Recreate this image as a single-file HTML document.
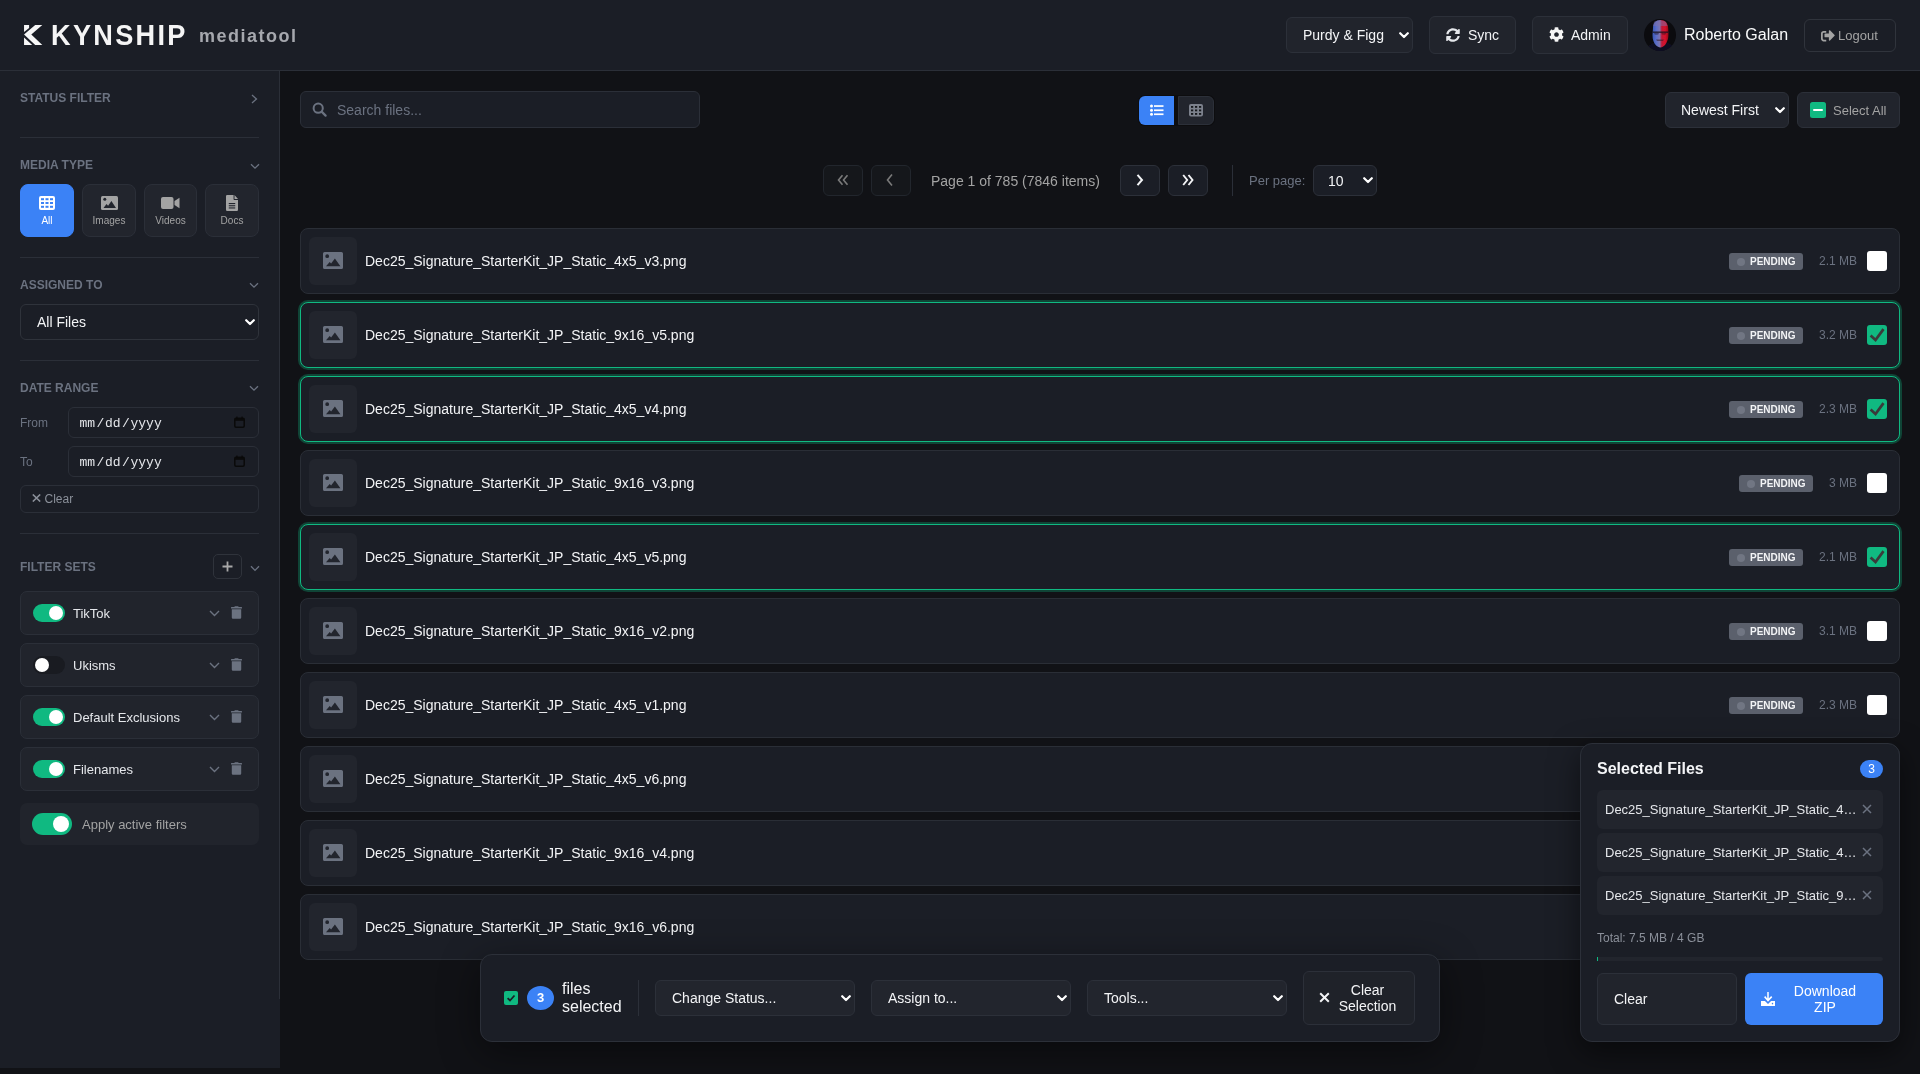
<!DOCTYPE html>
<html><head><meta charset="utf-8">
<style>
*{box-sizing:border-box;margin:0;padding:0}
html,body{width:1920px;height:1074px;overflow:hidden;-webkit-font-smoothing:antialiased;background:#111216;font-family:"Liberation Sans",sans-serif;color:#e5e7eb}
div,span,svg{position:absolute}
.t{white-space:nowrap}
#hdr{left:0;top:0;width:1920px;height:71px;background:#1b1e26;border-bottom:1px solid #2b2f38}
#side{left:0;top:71px;width:280px;height:997px;background:#1b1e26}
#sideb{left:279px;top:71px;width:1px;height:928px;background:#2b2f38}
.lbl{left:20px;font-size:12px;font-weight:700;color:#6b7280;line-height:14px;white-space:nowrap}
.dv{left:20px;width:239px;height:1px;background:#2b2f38}
.hbtn{background:#21242c;border:1px solid #2c3039;border-radius:6px}
.mt{top:184px;width:54px;height:53px;border-radius:8px;background:#22252d;border:1px solid #2b2f38;color:#a3a3a3;font-size:10px;text-align:center}
.mt span{left:0;right:0;top:30px;line-height:12px}
.card{left:20px;width:239px;height:44px;background:#21242c;border:1px solid #2b2f38;border-radius:7px}
.tog{left:12px;top:12px;width:32px;height:18px;border-radius:9px;background:#10b981}
.tog i{position:absolute;top:2px;left:16px;width:14px;height:14px;border-radius:50%;background:#fff}
.tog.off{background:#191b21}
.tog.off i{left:2px}
.card .nm{left:52px;top:14px;font-size:13px;line-height:15px;color:#e5e7eb;white-space:nowrap}
.card .cv{left:188px;top:18px}
.card .tr{left:210px;top:14px}
.row{left:300px;width:1600px;height:66px;background:#1b1e26;border:1px solid #2a2e36;border-radius:8px;overflow:hidden}
.row.sel{border:1px solid #10b981;box-shadow:0 0 0 2px rgba(16,185,129,.3);overflow:visible}
.thumb{width:48px;height:48px;border-radius:6px;background:#22252d}
.thumb svg{left:14px;top:15px}
.fn{font-size:14px;line-height:16px;color:#f3f4f6;white-space:nowrap}
.badge{width:74px;height:17px;border-radius:3px;background:#5b606c;color:#f3f4f6;font-size:10px;font-weight:700;line-height:17px;padding-left:21px;white-space:nowrap}
.badge i{position:absolute;left:8px;top:4.5px;width:8px;height:8px;border-radius:50%;background:#717683}
.size{font-size:12px;line-height:14px;color:#6b7280;white-space:nowrap;text-align:right}
.cb{left:1566px;width:20px;height:20px;border-radius:3px;background:#fff}
.cb.on{background:#10b981}
.cb svg{left:0;top:0}
.pg{top:165px;width:40px;height:31px;border-radius:6px}
.pg.dis{background:#15171b;border:1px solid #22262d}
.pg.en{background:#1b1e26;border:1px solid #2c3039}
.sel2{background:#21242c;border:1px solid #2c3039;border-radius:6px}
</style></head><body><div id="root" style="left:0;top:0;width:1920px;height:1074px;will-change:transform">
<div id="hdr">
  <svg style="left:20px;top:20px" width="30" height="30" viewBox="0 0 30 30"><path fill="#f8f8f8" d="M4.05 4.9H9.1V8.1L4.05 12z M15.2 4.9H22.3L11.3 14.5 22.3 24.9H15.2L4.05 14.5z M4.05 17.5L12.2 24.9H4.05z"/></svg>
  <div class="t" style="left:51px;top:20px;font-size:29.5px;line-height:30px;font-weight:700;color:#f5f5f5;letter-spacing:2.5px;transform:scaleX(0.92);transform-origin:0 0">KYNSHIP</div>
  <div class="t" style="left:199px;top:26px;font-size:18px;line-height:20px;font-weight:700;color:#a6a8ae;letter-spacing:1.5px">mediatool</div>

  <div class="hbtn" style="left:1286px;top:17px;width:127px;height:36px"></div>
  <div class="t" style="left:1303px;top:27px;font-size:14px;line-height:16px;color:#f3f4f6">Purdy &amp; Figg</div>
  <svg style="left:1399px;top:32px" width="10" height="7" viewBox="0 0 10 7"><path d="M1.2 1.2L5 5l3.8-3.8" fill="none" stroke="#fff" stroke-width="2.2" stroke-linecap="round" stroke-linejoin="round"/></svg>

  <div class="hbtn" style="left:1429px;top:16px;width:87px;height:38px"></div>
  <svg style="left:1446px;top:28px" width="14" height="14" viewBox="0 0 512 512"><path fill="#e5e7eb" d="M370.7 133.3C339.5 104 298.9 88 255.8 88c-77.5.1-144.3 53.2-162.8 126.9-1.3 5.4-6.1 9.2-11.7 9.2H24.1c-7.5 0-13.2-6.8-11.8-14.2C33.9 94.9 134.8 8 256 8c66.4 0 126.8 26.1 171.3 68.7L463 41c15.1-15.1 41-4.4 41 17v134c0 13.3-10.7 24-24 24H346c-21.4 0-32.1-25.9-17-41l41.7-41.7zM32 296h134c21.4 0 32.1 25.9 17 41l-41.8 41.8c31.3 29.3 71.8 45.3 114.9 45.2 77.4-.1 144.3-53.1 162.8-126.8 1.3-5.4 6.1-9.2 11.7-9.2h57.3c7.5 0 13.2 6.8 11.8 14.2C478.1 417.1 377.2 504 256 504c-66.4 0-126.8-26.1-171.3-68.7L49 471c-15.1 15.1-41 4.4-41-17V320c0-13.3 10.7-24 24-24z"/></svg>
  <div class="t" style="left:1468px;top:27px;font-size:14px;line-height:16px;color:#f3f4f6">Sync</div>

  <div class="hbtn" style="left:1532px;top:16px;width:96px;height:38px"></div>
  <svg style="left:1549px;top:27px" width="15" height="15" viewBox="0 0 512 512"><path fill="#f5f5f5" d="M487.4 315.7l-42.6-24.6c4.3-23.2 4.3-47 0-70.2l42.6-24.6c4.9-2.8 7.1-8.6 5.5-14-11.1-35.6-30-67.8-54.7-94.6-3.8-4.1-10-5.1-14.8-2.3L380.8 110c-17.9-15.4-38.5-27.3-60.8-35.1V25.8c0-5.6-3.9-10.5-9.4-11.7-36.7-8.2-74.3-7.8-109.2 0-5.5 1.2-9.4 6.1-9.4 11.7V75c-22.2 7.9-42.8 19.8-60.8 35.1L88.7 85.5c-4.9-2.8-11-1.9-14.8 2.3-24.7 26.7-43.6 58.9-54.7 94.6-1.7 5.4.6 11.2 5.5 14L67.3 221c-4.3 23.2-4.3 47 0 70.2l-42.6 24.6c-4.9 2.8-7.1 8.6-5.5 14 11.1 35.6 30 67.8 54.7 94.6 3.8 4.1 10 5.1 14.8 2.3l42.6-24.6c17.9 15.4 38.5 27.3 60.8 35.1v49.2c0 5.6 3.9 10.5 9.4 11.7 36.7 8.2 74.3 7.8 109.2 0 5.5-1.2 9.4-6.1 9.4-11.7v-49.2c22.2-7.9 42.8-19.8 60.8-35.1l42.6 24.6c4.9 2.8 11 1.9 14.8-2.3 24.7-26.7 43.6-58.9 54.7-94.6 1.5-5.5-.7-11.3-5.6-14.1zM256 336c-44.1 0-80-35.9-80-80s35.9-80 80-80 80 35.9 80 80-35.9 80-80 80z"/></svg>
  <div class="t" style="left:1571px;top:27px;font-size:14px;line-height:16px;color:#f3f4f6">Admin</div>

  <svg style="left:1644px;top:19px" width="32" height="32" viewBox="0 0 32 32">
    <defs>
      <linearGradient id="fg" x1="0" y1="0" x2="1" y2="0"><stop offset="0" stop-color="#3a58b8"/><stop offset=".25" stop-color="#5c6ec8"/><stop offset=".45" stop-color="#7c74b0"/><stop offset=".58" stop-color="#c01838"/><stop offset=".8" stop-color="#d8102a"/><stop offset="1" stop-color="#900818"/></linearGradient>
      <clipPath id="cc"><circle cx="16" cy="16" r="16"/></clipPath><filter id="bl" x="-20%" y="-20%" width="140%" height="140%"><feGaussianBlur stdDeviation="0.6"/></filter>
    </defs>
    <g clip-path="url(#cc)">
      <rect width="32" height="32" fill="#0b0b0e"/><g filter="url(#bl)">
      <path d="M3 32c1-6 5-8 9-9l4 4 5-4c4 1 9 3 10 9z" fill="#0e1020"/>
      <path d="M9 9c0-5 3-8 7.5-8S24 4 24.2 9l.3 6c0 6-2 9-3.5 11-1.5 1.6-3 2.4-4.5 2.4s-3.4-.8-5-2.6C10 24 8.5 21 8.5 16z" fill="url(#fg)"/>
      <path d="M8.6 12.4h15.8v1.6H8.6z" fill="#1a1420" opacity=".75"/>
      <ellipse cx="12.5" cy="14.2" rx="2.4" ry="1.5" fill="#2a2440" opacity=".6"/>
      <ellipse cx="19.8" cy="14.2" rx="2.4" ry="1.5" fill="#501020" opacity=".6"/>
      <path d="M12 20.5h8l-1 1.6h-6z" fill="#301828" opacity=".55"/>
      <path d="M10 3c2-2 9-2 12 0l1.5 4H9z" fill="#8070a8" opacity=".5"/>
    </g></g>
  </svg>
  <div class="t" style="left:1684px;top:26px;font-size:16px;line-height:18px;color:#f9fafb">Roberto Galan</div>

  <div style="left:1804px;top:19px;width:92px;height:33px;border:1px solid #30343c;border-radius:6px"></div>
  <svg style="left:1821px;top:29px" width="14" height="13" viewBox="0 0 512 460"><path fill="#a3a3a3" d="M497 243L329 411c-15 15-41 4.5-41-17v-96H152c-13.3 0-24-10.7-24-24v-96c0-13.3 10.7-24 24-24h136V58c0-21.400 26-32 41-17l168 168c9.3 9.4 9.3 24.6 0 34zM192 436v-40c0-6.600-5.400-12-12-12H96c-17.700 0-32-14.300-32-32V160c0-17.700 14.300-32 32-32h84c6.600 0 12-5.400 12-12V76c0-6.600-5.400-12-12-12H96c-53 0-96 43-96 96v192c0 53 43 96 96 96h84c6.600 0 12-5.400 12-12z"/></svg>
  <div class="t" style="left:1838px;top:28px;font-size:13px;line-height:15px;color:#a3a3a3">Logout</div>
</div>

<div id="side"></div>
<div id="sideb"></div>

<!-- STATUS FILTER -->
<div class="lbl" style="top:91px">STATUS FILTER</div>
<svg style="left:251px;top:94px" width="7" height="10" viewBox="0 0 7 10"><path d="M1 1l4.5 4L1 9" fill="none" stroke="#6b7280" stroke-width="1.3"/></svg>
<div class="dv" style="top:137px"></div>

<!-- MEDIA TYPE -->
<div class="lbl" style="top:158px">MEDIA TYPE</div>
<svg style="left:249.5px;top:162.5px" width="10" height="7" viewBox="0 0 10 7"><path d="M1 1.2l4 4 4-4" fill="none" stroke="#6b7280" stroke-width="1.3"/></svg>
<div class="mt" style="left:20px;background:#3b82f6;border-color:#3b82f6;color:#fff">
  <svg style="left:18px;top:11px" width="16" height="14" viewBox="0 0 16 14"><rect x="0" y="0" width="16" height="14" rx="2" fill="#fff"/><g fill="#3b82f6"><rect x="2" y="2.2" width="3" height="2"/><rect x="6.5" y="2.2" width="3" height="2"/><rect x="11" y="2.2" width="3" height="2"/><rect x="2" y="6" width="3" height="2"/><rect x="6.5" y="6" width="3" height="2"/><rect x="11" y="6" width="3" height="2"/><rect x="2" y="9.8" width="3" height="2"/><rect x="6.5" y="9.8" width="3" height="2"/><rect x="11" y="9.8" width="3" height="2"/></g></svg>
  <span>All</span></div>
<div class="mt" style="left:82px">
  <svg style="left:18px;top:11px" width="17" height="14" viewBox="0 0 17 14"><rect x="0" y="0" width="17" height="14" rx="1.5" fill="#a3a3a3"/><circle cx="3.8" cy="3.3" r="1.5" fill="#22252d"/><path d="M2.5 12h12.5l-4.6-7-3.3 4.8-1.6-1.8z" fill="#22252d"/></svg>
  <span>Images</span></div>
<div class="mt" style="left:144px;width:53px">
  <svg style="left:16px;top:12px" width="19" height="12" viewBox="0 0 19 12"><rect x="0" y="0" width="12.5" height="12" rx="2" fill="#a3a3a3"/><path d="M13.5 4l5-3.2v10.4l-5-3.2z" fill="#a3a3a3"/></svg>
  <span>Videos</span></div>
<div class="mt" style="left:205px;width:54px">
  <svg style="left:20px;top:10px" width="12" height="16" viewBox="0 0 13 16" preserveAspectRatio="none"><path d="M1.2 0H8.2v4.3a.8.8 0 0 0 .8.8H13V14.8A1.2 1.2 0 0 1 11.8 16H1.2A1.2 1.2 0 0 1 0 14.8V1.2A1.2 1.2 0 0 1 1.2 0zM9.2 0L13 3.9H9.2z" fill="#a3a3a3"/><g fill="#22252d"><rect x="3" y="8" width="7" height="1.1"/><rect x="3" y="10.2" width="7" height="1.1"/><rect x="3" y="12.4" width="7" height="1.1"/></g></svg>
  <span>Docs</span></div>
<div class="dv" style="top:257px"></div>

<!-- ASSIGNED TO -->
<div class="lbl" style="top:278px">ASSIGNED TO</div>
<svg style="left:249px;top:282px" width="10" height="7" viewBox="0 0 10 7"><path d="M1 1.2l4 4 4-4" fill="none" stroke="#6b7280" stroke-width="1.3"/></svg>
<div style="left:20px;top:304px;width:239px;height:36px;border:1px solid #2f333b;border-radius:6px;background:#1b1e26"></div>
<div class="t" style="left:37px;top:314px;font-size:14px;line-height:16px;color:#f3f4f6">All Files</div>
<svg style="left:245px;top:319px" width="10" height="7" viewBox="0 0 10 7"><path d="M1.2 1.2L5 5l3.8-3.8" fill="none" stroke="#fff" stroke-width="2.2" stroke-linecap="round" stroke-linejoin="round"/></svg>
<div class="dv" style="top:360px"></div>

<!-- DATE RANGE -->
<div class="lbl" style="top:381px">DATE RANGE</div>
<svg style="left:249px;top:385px" width="10" height="7" viewBox="0 0 10 7"><path d="M1 1.2l4 4 4-4" fill="none" stroke="#6b7280" stroke-width="1.3"/></svg>
<div class="t" style="left:20px;top:416px;font-size:12px;line-height:14px;color:#6b7280">From</div>
<div style="left:68px;top:407px;width:191px;height:31px;border:1px solid #2b2f38;border-radius:6px;background:#1b1e26"></div>
<div class="t" style="left:79.5px;top:416px;font-family:'Liberation Mono',monospace;font-size:13px;line-height:16px;color:#e5e7eb">mm</div><div class="t" style="left:96.5px;top:416px;font-family:'Liberation Mono',monospace;font-size:13px;line-height:16px;color:#e5e7eb">/</div><div class="t" style="left:105px;top:416px;font-family:'Liberation Mono',monospace;font-size:13px;line-height:16px;color:#e5e7eb">dd</div><div class="t" style="left:122px;top:416px;font-family:'Liberation Mono',monospace;font-size:13px;line-height:16px;color:#e5e7eb">/</div><div class="t" style="left:130.5px;top:416px;font-family:'Liberation Mono',monospace;font-size:13px;line-height:16px;color:#e5e7eb">yyyy</div>
<svg style="left:234px;top:416px" width="11" height="12" viewBox="0 0 11 12"><rect x="0.8" y="2.2" width="9.4" height="9" rx="1.2" fill="none" stroke="#0a0a0a" stroke-width="1.5"/><rect x="0.8" y="2.2" width="9.4" height="2.6" fill="#0a0a0a"/><rect x="2.2" y="0.6" width="1.4" height="2" fill="#0a0a0a"/><rect x="7.4" y="0.6" width="1.4" height="2" fill="#0a0a0a"/></svg>
<div class="t" style="left:20px;top:455px;font-size:12px;line-height:14px;color:#6b7280">To</div>
<div style="left:68px;top:446px;width:191px;height:31px;border:1px solid #2b2f38;border-radius:6px;background:#1b1e26"></div>
<div class="t" style="left:79.5px;top:455px;font-family:'Liberation Mono',monospace;font-size:13px;line-height:16px;color:#e5e7eb">mm</div><div class="t" style="left:96.5px;top:455px;font-family:'Liberation Mono',monospace;font-size:13px;line-height:16px;color:#e5e7eb">/</div><div class="t" style="left:105px;top:455px;font-family:'Liberation Mono',monospace;font-size:13px;line-height:16px;color:#e5e7eb">dd</div><div class="t" style="left:122px;top:455px;font-family:'Liberation Mono',monospace;font-size:13px;line-height:16px;color:#e5e7eb">/</div><div class="t" style="left:130.5px;top:455px;font-family:'Liberation Mono',monospace;font-size:13px;line-height:16px;color:#e5e7eb">yyyy</div>
<svg style="left:234px;top:455px" width="11" height="12" viewBox="0 0 11 12"><rect x="0.8" y="2.2" width="9.4" height="9" rx="1.2" fill="none" stroke="#0a0a0a" stroke-width="1.5"/><rect x="0.8" y="2.2" width="9.4" height="2.6" fill="#0a0a0a"/><rect x="2.2" y="0.6" width="1.4" height="2" fill="#0a0a0a"/><rect x="7.4" y="0.6" width="1.4" height="2" fill="#0a0a0a"/></svg>
<div style="left:20px;top:485px;width:239px;height:28px;border:1px solid #2b2f38;border-radius:6px;background:#1b1e26"></div>
<svg style="left:32px;top:494px" width="9" height="8" viewBox="0 0 9 8"><path d="M0.8 0.5l7.4 7M8.2 0.5l-7.4 7" stroke="#8b909a" stroke-width="1.6"/></svg><div class="t" style="left:44.5px;top:492px;font-size:12px;line-height:14px;color:#8b909a">Clear</div>
<div class="dv" style="top:533px"></div>

<!-- FILTER SETS -->
<div class="lbl" style="top:560px">FILTER SETS</div>
<div style="left:213px;top:554px;width:29px;height:25px;border:1px solid #2f333b;border-radius:5px"></div>
<svg style="left:222px;top:560.5px" width="11" height="11" viewBox="0 0 11 11"><path d="M5.5 0.5v10M0.5 5.5h10" stroke="#a8a8a8" stroke-width="1.8"/></svg>
<svg style="left:249.5px;top:564.5px" width="10" height="7" viewBox="0 0 10 7"><path d="M1 1.2l4 4.2 4-4.2" fill="none" stroke="#6b7280" stroke-width="1.3"/></svg>

<div class="card" style="top:591px"><div class="tog"><i></i></div><div class="nm">TikTok</div><svg class="cv" width="11" height="7" viewBox="0 0 11 7"><path d="M1 1l4.5 4.5L10 1" fill="none" stroke="#6b7280" stroke-width="1.4"/></svg><div class="tr"><svg width="11" height="13" viewBox="0 0 448 512"><path fill="#6b7280" d="M32 464a48 48 0 0 0 48 48h288a48 48 0 0 0 48-48V128H32zM432 32H312l-9.4-18.7A24 24 0 0 0 281.1 0H166.8a23.7 23.7 0 0 0-21.4 13.3L136 32H16A16 16 0 0 0 0 48v32a16 16 0 0 0 16 16h416a16 16 0 0 0 16-16V48a16 16 0 0 0-16-16z"/></svg></div></div>
<div class="card" style="top:643px"><div class="tog off"><i></i></div><div class="nm">Ukisms</div><svg class="cv" width="11" height="7" viewBox="0 0 11 7"><path d="M1 1l4.5 4.5L10 1" fill="none" stroke="#6b7280" stroke-width="1.4"/></svg><div class="tr"><svg width="11" height="13" viewBox="0 0 448 512"><path fill="#6b7280" d="M32 464a48 48 0 0 0 48 48h288a48 48 0 0 0 48-48V128H32zM432 32H312l-9.4-18.7A24 24 0 0 0 281.1 0H166.8a23.7 23.7 0 0 0-21.4 13.3L136 32H16A16 16 0 0 0 0 48v32a16 16 0 0 0 16 16h416a16 16 0 0 0 16-16V48a16 16 0 0 0-16-16z"/></svg></div></div>
<div class="card" style="top:695px"><div class="tog"><i></i></div><div class="nm">Default Exclusions</div><svg class="cv" width="11" height="7" viewBox="0 0 11 7"><path d="M1 1l4.5 4.5L10 1" fill="none" stroke="#6b7280" stroke-width="1.4"/></svg><div class="tr"><svg width="11" height="13" viewBox="0 0 448 512"><path fill="#6b7280" d="M32 464a48 48 0 0 0 48 48h288a48 48 0 0 0 48-48V128H32zM432 32H312l-9.4-18.7A24 24 0 0 0 281.1 0H166.8a23.7 23.7 0 0 0-21.4 13.3L136 32H16A16 16 0 0 0 0 48v32a16 16 0 0 0 16 16h416a16 16 0 0 0 16-16V48a16 16 0 0 0-16-16z"/></svg></div></div>
<div class="card" style="top:747px"><div class="tog"><i></i></div><div class="nm">Filenames</div><svg class="cv" width="11" height="7" viewBox="0 0 11 7"><path d="M1 1l4.5 4.5L10 1" fill="none" stroke="#6b7280" stroke-width="1.4"/></svg><div class="tr"><svg width="11" height="13" viewBox="0 0 448 512"><path fill="#6b7280" d="M32 464a48 48 0 0 0 48 48h288a48 48 0 0 0 48-48V128H32zM432 32H312l-9.4-18.7A24 24 0 0 0 281.1 0H166.8a23.7 23.7 0 0 0-21.4 13.3L136 32H16A16 16 0 0 0 0 48v32a16 16 0 0 0 16 16h416a16 16 0 0 0 16-16V48a16 16 0 0 0-16-16z"/></svg></div></div>

<div style="left:20px;top:803px;width:239px;height:42px;background:#21242c;border-radius:7px"></div>
<div style="left:32px;top:813px;width:40px;height:22px;border-radius:11px;background:#10b981"><i style="position:absolute;left:21px;top:3px;width:16px;height:16px;border-radius:50%;background:#fff"></i></div>
<div class="t" style="left:82px;top:817px;font-size:13px;line-height:15px;color:#a3a3a3">Apply active filters</div>

<!-- SEARCH -->
<div style="left:300px;top:91px;width:400px;height:37px;background:#1b1e26;border:1px solid #2b2f38;border-radius:6px"></div>
<svg style="left:312px;top:102px" width="15" height="15" viewBox="0 0 15 15"><circle cx="6.2" cy="6.2" r="4.6" fill="none" stroke="#6b7280" stroke-width="2"/><path d="M9.6 9.6l4 4" stroke="#6b7280" stroke-width="2.2" stroke-linecap="round"/></svg>
<div class="t" style="left:337px;top:102px;font-size:14px;line-height:16px;color:#6b7280">Search files...</div>

<!-- VIEW TOGGLE -->
<div style="left:1138px;top:95px;width:77px;height:31px;background:#0d0d0f;border-radius:7px"></div>
<div style="left:1139px;top:96px;width:35px;height:29px;background:#3b82f6;border-radius:6px 0 0 6px"></div>
<svg style="left:1150px;top:104px" width="14" height="13" viewBox="0 0 14 13"><g fill="#fff"><circle cx="1.5" cy="2" r="1.5"/><circle cx="1.5" cy="6.3" r="1.5"/><circle cx="1.5" cy="10.3" r="1.5"/><rect x="4" y="1.2" width="9.5" height="1.7"/><rect x="4" y="5.4" width="9.5" height="1.7"/><rect x="4" y="9.4" width="9.5" height="1.7"/></g></svg>
<div style="left:1178px;top:96px;width:36px;height:29px;background:#22252d;border:1px solid #2c3039;border-radius:0 6px 6px 0"></div>
<svg style="left:1189px;top:104px" width="14" height="13" viewBox="0 0 14 13"><rect x="0" y="0" width="14" height="12.5" rx="2" fill="#7c818c"/><g fill="#15171b"><rect x="2" y="2" width="2.2" height="1.8"/><rect x="6" y="2" width="2.2" height="1.8"/><rect x="10" y="2" width="2.2" height="1.8"/><rect x="2" y="5.5" width="2.2" height="1.8"/><rect x="6" y="5.5" width="2.2" height="1.8"/><rect x="10" y="5.5" width="2.2" height="1.8"/><rect x="2" y="9" width="2.2" height="1.8"/><rect x="6" y="9" width="2.2" height="1.8"/><rect x="10" y="9" width="2.2" height="1.8"/></g></svg>

<!-- SORT / SELECT ALL -->
<div class="sel2" style="left:1665px;top:92px;width:124px;height:36px"></div>
<div class="t" style="left:1681px;top:102px;font-size:14px;line-height:16px;color:#f3f4f6">Newest First</div>
<svg style="left:1775px;top:107px" width="10" height="7" viewBox="0 0 10 7"><path d="M1.2 1.2L5 5l3.8-3.8" fill="none" stroke="#fff" stroke-width="2.2" stroke-linecap="round" stroke-linejoin="round"/></svg>
<div class="sel2" style="left:1797px;top:92px;width:103px;height:36px"></div>
<div style="left:1810px;top:102px;width:16px;height:16px;background:#10b981;border-radius:2.5px"><i style="position:absolute;left:3px;top:6.8px;width:10px;height:2.4px;background:#fff;border-radius:1px"></i></div>
<div class="t" style="left:1833px;top:103px;font-size:13px;line-height:15px;color:#a3a3a3">Select All</div>

<!-- PAGINATION -->
<div class="pg dis" style="left:823px"></div>
<svg style="left:837px;top:174px" width="12" height="12" viewBox="0 0 12 12"><path d="M5.5 1.2L1.5 6l4 4.8M10.5 1.2L6.5 6l4 4.8" fill="none" stroke="#7a7a7a" stroke-width="1.6"/></svg>
<div class="pg dis" style="left:871px"></div>
<svg style="left:886px;top:174px" width="8" height="12" viewBox="0 0 8 12"><path d="M6 0.5L1.5 6 6 11.5" fill="none" stroke="#7a7a7a" stroke-width="1.6"/></svg>
<div class="t" style="left:931px;top:173px;font-size:14px;line-height:16px;color:#a3a3a3">Page 1 of 785 (7846 items)</div>
<div class="pg en" style="left:1120px"></div>
<svg style="left:1136px;top:174px" width="8" height="12" viewBox="0 0 8 12"><path d="M1.5 0.8L6 6 1.5 11.2" fill="none" stroke="#f3f4f6" stroke-width="2"/></svg>
<div class="pg en" style="left:1168px"></div>
<svg style="left:1182px;top:174px" width="12" height="12" viewBox="0 0 12 12"><path d="M1.2 1L5.2 6l-4 5M6.5 1l4 5-4 5" fill="none" stroke="#f3f4f6" stroke-width="1.9"/></svg>
<div style="left:1232px;top:165px;width:1px;height:31px;background:#2b2f38"></div>
<div class="t" style="left:1249px;top:173px;font-size:13px;line-height:15px;color:#6b7280">Per page:</div>
<div class="sel2" style="left:1313px;top:165px;width:64px;height:31px;background:#1b1e26"></div>
<div class="t" style="left:1328px;top:173px;font-size:14px;line-height:16px;color:#f3f4f6">10</div>
<svg style="left:1363px;top:177px" width="10" height="7" viewBox="0 0 10 7"><path d="M1.2 1.2L5 5l3.8-3.8" fill="none" stroke="#fff" stroke-width="2.2" stroke-linecap="round" stroke-linejoin="round"/></svg>

<!-- ROWS -->
<div class="row" style="top:228px">
<div class="thumb" style="left:8px;top:8px"><svg width="20" height="17" viewBox="0 0 20 17"><path fill="#6b7280" fill-rule="evenodd" d="M1.6 0h16.8A1.6 1.6 0 0 1 20 1.6v13.8a1.6 1.6 0 0 1-1.6 1.6H1.6A1.6 1.6 0 0 1 0 15.4V1.6A1.6 1.6 0 0 1 1.6 0zM4.2 2.3a1.9 1.9 0 1 0 0 3.8 1.9 1.9 0 1 0 0-3.8zM3 14.2h14.4L11.9 6.4 8.1 11.6 6.7 10z"/></svg></div>
<div class="fn" style="left:64px;top:24px">Dec25_Signature_StarterKit_JP_Static_4x5_v3.png</div>
<div class="badge" style="left:1428px;top:24px"><i></i>PENDING</div>
<div class="size" style="right:42px;top:25px">2.1 MB</div>
<div class="cb" style="top:22px"></div>
</div>
<div class="row sel" style="top:302px">
<div class="thumb" style="left:8px;top:8px"><svg width="20" height="17" viewBox="0 0 20 17"><path fill="#6b7280" fill-rule="evenodd" d="M1.6 0h16.8A1.6 1.6 0 0 1 20 1.6v13.8a1.6 1.6 0 0 1-1.6 1.6H1.6A1.6 1.6 0 0 1 0 15.4V1.6A1.6 1.6 0 0 1 1.6 0zM4.2 2.3a1.9 1.9 0 1 0 0 3.8 1.9 1.9 0 1 0 0-3.8zM3 14.2h14.4L11.9 6.4 8.1 11.6 6.7 10z"/></svg></div>
<div class="fn" style="left:64px;top:24px">Dec25_Signature_StarterKit_JP_Static_9x16_v5.png</div>
<div class="badge" style="left:1428px;top:24px"><i></i>PENDING</div>
<div class="size" style="right:42px;top:25px">3.2 MB</div>
<div class="cb on" style="top:22px"><svg width="20" height="20" viewBox="0 0 20 20"><path d="M3.6 10.6l4.9 4.5 8-11" fill="none" stroke="#3a3a3a" stroke-width="2.7"/></svg></div>
</div>
<div class="row sel" style="top:376px">
<div class="thumb" style="left:8px;top:8px"><svg width="20" height="17" viewBox="0 0 20 17"><path fill="#6b7280" fill-rule="evenodd" d="M1.6 0h16.8A1.6 1.6 0 0 1 20 1.6v13.8a1.6 1.6 0 0 1-1.6 1.6H1.6A1.6 1.6 0 0 1 0 15.4V1.6A1.6 1.6 0 0 1 1.6 0zM4.2 2.3a1.9 1.9 0 1 0 0 3.8 1.9 1.9 0 1 0 0-3.8zM3 14.2h14.4L11.9 6.4 8.1 11.6 6.7 10z"/></svg></div>
<div class="fn" style="left:64px;top:24px">Dec25_Signature_StarterKit_JP_Static_4x5_v4.png</div>
<div class="badge" style="left:1428px;top:24px"><i></i>PENDING</div>
<div class="size" style="right:42px;top:25px">2.3 MB</div>
<div class="cb on" style="top:22px"><svg width="20" height="20" viewBox="0 0 20 20"><path d="M3.6 10.6l4.9 4.5 8-11" fill="none" stroke="#3a3a3a" stroke-width="2.7"/></svg></div>
</div>
<div class="row" style="top:450px">
<div class="thumb" style="left:8px;top:8px"><svg width="20" height="17" viewBox="0 0 20 17"><path fill="#6b7280" fill-rule="evenodd" d="M1.6 0h16.8A1.6 1.6 0 0 1 20 1.6v13.8a1.6 1.6 0 0 1-1.6 1.6H1.6A1.6 1.6 0 0 1 0 15.4V1.6A1.6 1.6 0 0 1 1.6 0zM4.2 2.3a1.9 1.9 0 1 0 0 3.8 1.9 1.9 0 1 0 0-3.8zM3 14.2h14.4L11.9 6.4 8.1 11.6 6.7 10z"/></svg></div>
<div class="fn" style="left:64px;top:24px">Dec25_Signature_StarterKit_JP_Static_9x16_v3.png</div>
<div class="badge" style="left:1438px;top:24px"><i></i>PENDING</div>
<div class="size" style="right:42px;top:25px">3 MB</div>
<div class="cb" style="top:22px"></div>
</div>
<div class="row sel" style="top:524px">
<div class="thumb" style="left:8px;top:8px"><svg width="20" height="17" viewBox="0 0 20 17"><path fill="#6b7280" fill-rule="evenodd" d="M1.6 0h16.8A1.6 1.6 0 0 1 20 1.6v13.8a1.6 1.6 0 0 1-1.6 1.6H1.6A1.6 1.6 0 0 1 0 15.4V1.6A1.6 1.6 0 0 1 1.6 0zM4.2 2.3a1.9 1.9 0 1 0 0 3.8 1.9 1.9 0 1 0 0-3.8zM3 14.2h14.4L11.9 6.4 8.1 11.6 6.7 10z"/></svg></div>
<div class="fn" style="left:64px;top:24px">Dec25_Signature_StarterKit_JP_Static_4x5_v5.png</div>
<div class="badge" style="left:1428px;top:24px"><i></i>PENDING</div>
<div class="size" style="right:42px;top:25px">2.1 MB</div>
<div class="cb on" style="top:22px"><svg width="20" height="20" viewBox="0 0 20 20"><path d="M3.6 10.6l4.9 4.5 8-11" fill="none" stroke="#3a3a3a" stroke-width="2.7"/></svg></div>
</div>
<div class="row" style="top:598px">
<div class="thumb" style="left:8px;top:8px"><svg width="20" height="17" viewBox="0 0 20 17"><path fill="#6b7280" fill-rule="evenodd" d="M1.6 0h16.8A1.6 1.6 0 0 1 20 1.6v13.8a1.6 1.6 0 0 1-1.6 1.6H1.6A1.6 1.6 0 0 1 0 15.4V1.6A1.6 1.6 0 0 1 1.6 0zM4.2 2.3a1.9 1.9 0 1 0 0 3.8 1.9 1.9 0 1 0 0-3.8zM3 14.2h14.4L11.9 6.4 8.1 11.6 6.7 10z"/></svg></div>
<div class="fn" style="left:64px;top:24px">Dec25_Signature_StarterKit_JP_Static_9x16_v2.png</div>
<div class="badge" style="left:1428px;top:24px"><i></i>PENDING</div>
<div class="size" style="right:42px;top:25px">3.1 MB</div>
<div class="cb" style="top:22px"></div>
</div>
<div class="row" style="top:672px">
<div class="thumb" style="left:8px;top:8px"><svg width="20" height="17" viewBox="0 0 20 17"><path fill="#6b7280" fill-rule="evenodd" d="M1.6 0h16.8A1.6 1.6 0 0 1 20 1.6v13.8a1.6 1.6 0 0 1-1.6 1.6H1.6A1.6 1.6 0 0 1 0 15.4V1.6A1.6 1.6 0 0 1 1.6 0zM4.2 2.3a1.9 1.9 0 1 0 0 3.8 1.9 1.9 0 1 0 0-3.8zM3 14.2h14.4L11.9 6.4 8.1 11.6 6.7 10z"/></svg></div>
<div class="fn" style="left:64px;top:24px">Dec25_Signature_StarterKit_JP_Static_4x5_v1.png</div>
<div class="badge" style="left:1428px;top:24px"><i></i>PENDING</div>
<div class="size" style="right:42px;top:25px">2.3 MB</div>
<div class="cb" style="top:22px"></div>
</div>
<div class="row" style="top:746px">
<div class="thumb" style="left:8px;top:8px"><svg width="20" height="17" viewBox="0 0 20 17"><path fill="#6b7280" fill-rule="evenodd" d="M1.6 0h16.8A1.6 1.6 0 0 1 20 1.6v13.8a1.6 1.6 0 0 1-1.6 1.6H1.6A1.6 1.6 0 0 1 0 15.4V1.6A1.6 1.6 0 0 1 1.6 0zM4.2 2.3a1.9 1.9 0 1 0 0 3.8 1.9 1.9 0 1 0 0-3.8zM3 14.2h14.4L11.9 6.4 8.1 11.6 6.7 10z"/></svg></div>
<div class="fn" style="left:64px;top:24px">Dec25_Signature_StarterKit_JP_Static_4x5_v6.png</div>
<div class="badge" style="left:1428px;top:24px"><i></i>PENDING</div>
<div class="size" style="right:42px;top:25px">2.2 MB</div>
<div class="cb" style="top:22px"></div>
</div>
<div class="row" style="top:820px">
<div class="thumb" style="left:8px;top:8px"><svg width="20" height="17" viewBox="0 0 20 17"><path fill="#6b7280" fill-rule="evenodd" d="M1.6 0h16.8A1.6 1.6 0 0 1 20 1.6v13.8a1.6 1.6 0 0 1-1.6 1.6H1.6A1.6 1.6 0 0 1 0 15.4V1.6A1.6 1.6 0 0 1 1.6 0zM4.2 2.3a1.9 1.9 0 1 0 0 3.8 1.9 1.9 0 1 0 0-3.8zM3 14.2h14.4L11.9 6.4 8.1 11.6 6.7 10z"/></svg></div>
<div class="fn" style="left:64px;top:24px">Dec25_Signature_StarterKit_JP_Static_9x16_v4.png</div>
<div class="badge" style="left:1428px;top:24px"><i></i>PENDING</div>
<div class="size" style="right:42px;top:25px">3.2 MB</div>
<div class="cb" style="top:22px"></div>
</div>
<div class="row" style="top:894px">
<div class="thumb" style="left:8px;top:8px"><svg width="20" height="17" viewBox="0 0 20 17"><path fill="#6b7280" fill-rule="evenodd" d="M1.6 0h16.8A1.6 1.6 0 0 1 20 1.6v13.8a1.6 1.6 0 0 1-1.6 1.6H1.6A1.6 1.6 0 0 1 0 15.4V1.6A1.6 1.6 0 0 1 1.6 0zM4.2 2.3a1.9 1.9 0 1 0 0 3.8 1.9 1.9 0 1 0 0-3.8zM3 14.2h14.4L11.9 6.4 8.1 11.6 6.7 10z"/></svg></div>
<div class="fn" style="left:64px;top:24px">Dec25_Signature_StarterKit_JP_Static_9x16_v6.png</div>
<div class="badge" style="left:1428px;top:24px"><i></i>PENDING</div>
<div class="size" style="right:42px;top:25px">3.1 MB</div>
<div class="cb" style="top:22px"></div>
</div>

<!-- SELECTED FILES PANEL -->
<div style="left:1580px;top:743px;width:320px;height:299px;background:#1b1e26;border:1px solid #2c3039;border-radius:12px;box-shadow:0 10px 30px rgba(0,0,0,.5)"></div>
<div class="t" style="left:1597px;top:760px;font-size:16px;line-height:18px;font-weight:700;color:#f3f4f6">Selected Files</div>
<div style="left:1860px;top:760px;width:23px;height:18px;border-radius:9px;background:#3b82f6;color:#fff;font-size:12px;line-height:18px;text-align:center">3</div>
<div style="left:1597px;top:790px;width:286px;height:39px;border-radius:6px;background:#22252d"></div>
<div class="t" style="left:1605px;top:802px;font-size:13px;line-height:15px;color:#e5e7eb">Dec25_Signature_StarterKit_JP_Static_4…</div>
<svg style="left:1862px;top:804px" width="10" height="10" viewBox="0 0 10 10"><path d="M1 1l8 8M9 1l-8 8" stroke="#6b7280" stroke-width="1.5"/></svg>
<div style="left:1597px;top:833px;width:286px;height:39px;border-radius:6px;background:#22252d"></div>
<div class="t" style="left:1605px;top:845px;font-size:13px;line-height:15px;color:#e5e7eb">Dec25_Signature_StarterKit_JP_Static_4…</div>
<svg style="left:1862px;top:847px" width="10" height="10" viewBox="0 0 10 10"><path d="M1 1l8 8M9 1l-8 8" stroke="#6b7280" stroke-width="1.5"/></svg>
<div style="left:1597px;top:876px;width:286px;height:39px;border-radius:6px;background:#22252d"></div>
<div class="t" style="left:1605px;top:888px;font-size:13px;line-height:15px;color:#e5e7eb">Dec25_Signature_StarterKit_JP_Static_9…</div>
<svg style="left:1862px;top:890px" width="10" height="10" viewBox="0 0 10 10"><path d="M1 1l8 8M9 1l-8 8" stroke="#6b7280" stroke-width="1.5"/></svg>
<div class="t" style="left:1597px;top:931px;font-size:12px;line-height:14px;color:#8b909a">Total: 7.5 MB / 4 GB</div>
<div style="left:1597px;top:957px;width:286px;height:4px;border-radius:2px;background:#22252d"></div>
<div style="left:1597px;top:957px;width:1.2px;height:4px;background:#10b981"></div>
<div style="left:1597px;top:973px;width:140px;height:52px;border:1px solid #2c3039;border-radius:6px;background:#21242c"></div>
<div class="t" style="left:1614px;top:991px;font-size:14px;line-height:16px;color:#f3f4f6">Clear</div>
<div style="left:1745px;top:973px;width:138px;height:52px;border-radius:6px;background:#3b82f6"></div>
<svg style="left:1761px;top:992px" width="14" height="14" viewBox="0 0 15 14" preserveAspectRatio="none"><path d="M6.7 0h1.6v6.6l2.6-2.6 1.2 1.2L7.5 9.8 3.3 5.2l1.2-1.2 2.2 2.6z" fill="#fff"/><path d="M0 9h4.2l3.3 3 3.3-3H15v5H0z" fill="#fff"/><circle cx="12.3" cy="11.6" r=".8" fill="#3b82f6"/></svg>
<div style="left:1787px;top:983px;width:76px;font-size:14px;line-height:16px;color:#fff;text-align:center">Download<br>ZIP</div>

<!-- BULK BAR -->
<div style="left:480px;top:954px;width:960px;height:88px;background:#1b1e26;border:1px solid #2c3039;border-radius:12px;box-shadow:0 10px 40px rgba(0,0,0,.45)"></div>
<div style="left:504px;top:991px;width:14px;height:14px;border-radius:2px;background:#10b981"></div>
<svg style="left:504px;top:991px" width="14" height="14" viewBox="0 0 14 14"><path d="M3.6 7.2l2.4 2.3 4.5-5" fill="none" stroke="#1b1e26" stroke-width="1.8"/></svg>
<div style="left:527px;top:986px;width:27px;height:24px;border-radius:50%;background:#3b82f6;color:#fff;font-size:13px;font-weight:700;line-height:24px;text-align:center">3</div>
<div style="left:562px;top:980px;font-size:16px;line-height:18px;color:#f3f4f6;white-space:nowrap">files<br>selected</div>
<div style="left:638px;top:980px;width:1px;height:36px;background:#2c3039"></div>
<div class="sel2" style="left:655px;top:980px;width:200px;height:36px;background:#22252d"></div>
<div class="t" style="left:672px;top:990px;font-size:14px;line-height:16px;color:#f3f4f6">Change Status...</div>
<svg style="left:841px;top:995px" width="10" height="7" viewBox="0 0 10 7"><path d="M1.2 1.2L5 5l3.8-3.8" fill="none" stroke="#fff" stroke-width="2.2" stroke-linecap="round" stroke-linejoin="round"/></svg>
<div class="sel2" style="left:871px;top:980px;width:200px;height:36px;background:#22252d"></div>
<div class="t" style="left:888px;top:990px;font-size:14px;line-height:16px;color:#f3f4f6">Assign to...</div>
<svg style="left:1057px;top:995px" width="10" height="7" viewBox="0 0 10 7"><path d="M1.2 1.2L5 5l3.8-3.8" fill="none" stroke="#fff" stroke-width="2.2" stroke-linecap="round" stroke-linejoin="round"/></svg>
<div class="sel2" style="left:1087px;top:980px;width:200px;height:36px;background:#22252d"></div>
<div class="t" style="left:1104px;top:990px;font-size:14px;line-height:16px;color:#f3f4f6">Tools...</div>
<svg style="left:1273px;top:995px" width="10" height="7" viewBox="0 0 10 7"><path d="M1.2 1.2L5 5l3.8-3.8" fill="none" stroke="#fff" stroke-width="2.2" stroke-linecap="round" stroke-linejoin="round"/></svg>
<div class="sel2" style="left:1303px;top:971px;width:112px;height:54px;background:#1f2229"></div>
<svg style="left:1319px;top:992px" width="11" height="11" viewBox="0 0 11 11"><path d="M1.2 1.2l8.6 8.6M9.8 1.2l-8.6 8.6" stroke="#f3f4f6" stroke-width="2"/></svg>
<div style="left:1336px;top:982px;width:63px;font-size:14px;line-height:16px;color:#f3f4f6;text-align:center">Clear<br>Selection</div>
</div>
</body></html>
